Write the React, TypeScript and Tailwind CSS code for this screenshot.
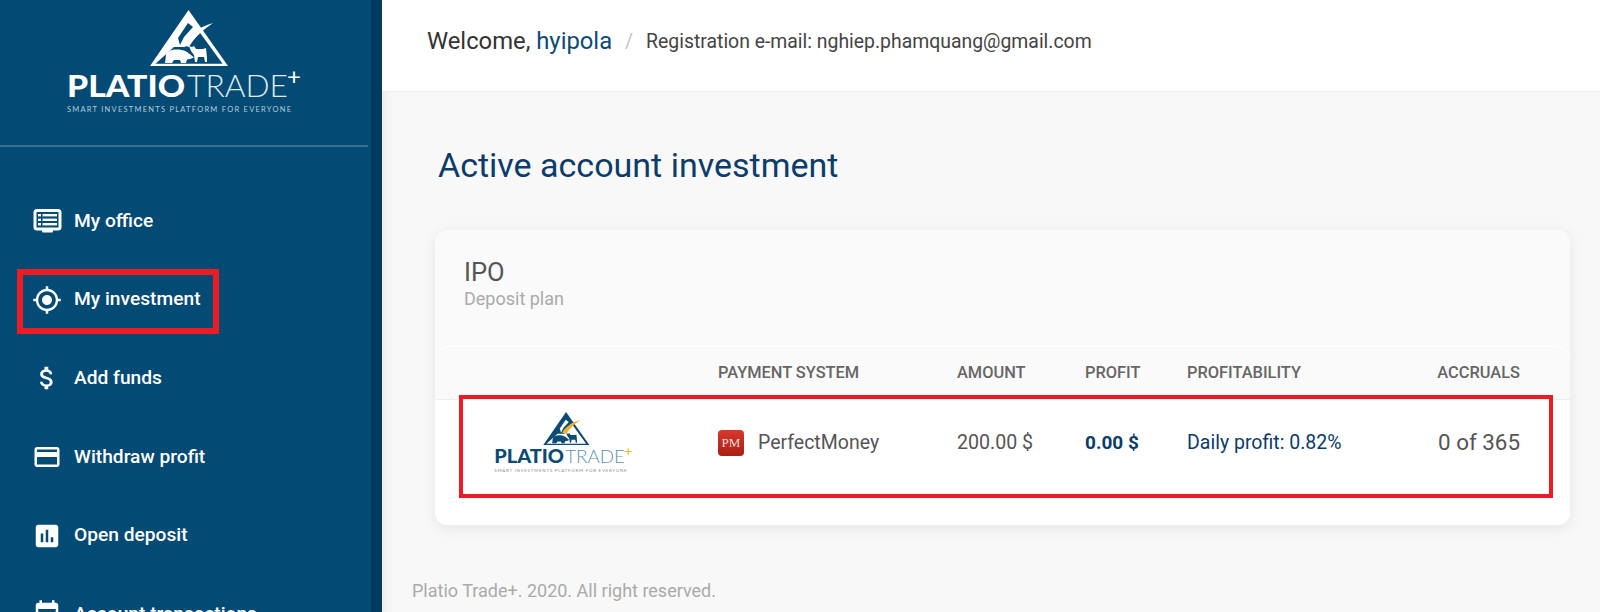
import { MdAssessment, MdAttachMoney, MdCreditCard, MdEvent, MdGpsFixed } from "react-icons/md"

function OfficeIcon() {
  return (
    <svg width="30" height="30" viewBox="0 0 30 30" fill="none">
      <rect x="3" y="4.5" width="25" height="18.5" rx="2" stroke="#fff" strokeWidth="3" />
      <rect x="10" y="24" width="11" height="2.6" rx="1" fill="#fff" />
      <rect x="6" y="8" width="3" height="2.4" fill="#fff" />
      <rect x="6" y="12.6" width="3" height="2.4" fill="#fff" />
      <rect x="6" y="17" width="3" height="2.4" fill="#fff" />
      <rect x="10.5" y="8" width="14.5" height="2.4" fill="#fff" />
      <rect x="10.5" y="12.6" width="14.5" height="2.4" fill="#fff" />
      <rect x="10.5" y="17" width="14.5" height="2.4" fill="#fff" />
    </svg>
  )
}

function Logo({ className, main, light, accent, tag, cut }: { className: string; main: string; light: string; accent: string; tag: string; cut: string }) {
  return (
    <svg className={className} viewBox="60 5 245 110">
      {/* mountain */}
      <path d="M188.5 10 L228 66 L150 66 Z" fill={main} />
      <path d="M155.5 63.7 L174 47 L185 47 L198 30 L222.5 63.7 Z" fill={cut} />
      <path d="M188 23 L193 27 L184 37 L180 45 L178 38 Z" fill={cut} />
      <path d="M182 45 C187 35 199 27 213 23 C205 29 196 35 189 47 Z" fill={accent} />
      {/* bear and bull */}
      <path d="M165 63 L166 55 C167 51 172 49.5 176 49.5 C180 49.5 184 50 187 52 L191 55 L194 57.5 L190 59 L187 59.5 L186 63 L181 63 L180 60 L174 60 L172 63 L168 63 Z" fill={main} />
      <path d="M189 46 L192 47 L194 46 L196 49 L203 49 L206 48 L207 58 L207 62 L205 62 L204 57 L198 57 L197 62 L195 62 L194 55 L191 51 Z" fill={main} />
      <text x="67" y="97" textLength="118" lengthAdjust="spacingAndGlyphs" fontFamily="Lato, sans-serif" fontWeight="900" fontSize="31" fill={main}>PLATIO</text>
      <text x="187" y="97" textLength="101" lengthAdjust="spacingAndGlyphs" fontFamily="Lato, sans-serif" fontWeight="300" fontSize="31" fill={light}>TRADE</text>
      <text x="287" y="85" fontFamily="Lato, sans-serif" fontWeight="400" fontSize="24" fill={accent}>+</text>
      <text x="67" y="112" textLength="224" fontFamily="Lato, sans-serif" fontWeight="400" fontSize="7.5" fill={tag}>SMART INVESTMENTS PLATFORM FOR EVERYONE</text>
    </svg>
  )
}

const navItems = [
  { label: "My office", icon: <OfficeIcon /> },
  { label: "My investment", icon: <MdGpsFixed size={30} />, marked: true },
  { label: "Add funds", icon: <MdAttachMoney size={30} /> },
  { label: "Withdraw profit", icon: <MdCreditCard size={30} /> },
  { label: "Open deposit", icon: <MdAssessment size={30} /> },
  { label: "Account transactions", icon: <MdEvent size={30} /> },
]

export default function App() {
  return (
    <div className="flex h-[612px] overflow-hidden bg-[#f8f8f8] font-['Roboto',sans-serif]">
      {/* Sidebar */}
      <aside className="w-[382px] shrink-0 bg-[#034a75] border-r-[11px] border-[#033b60] text-white">
        <div className="h-[147px] pt-[5px] border-b-2 border-[#3c6e90] mr-[3px]">
          <Logo className="w-[245px] h-[110px] ml-[60px]" main="#ffffff" light="#dfe8ee" accent="#ffffff" tag="#b5cad8" cut="#034a75" />
        </div>
        <nav className="pt-[35px]">
          {navItems.map((item) => (
            <div key={item.label} className="relative flex items-center h-[78.6px] pl-[32px] gap-[12px] text-[19.2px] font-medium">
              <span className="flex justify-center w-[30px]">{item.icon}</span>
              <span>{item.label}</span>
              {item.marked && (
                <div className="absolute left-[17px] top-[8px] w-[202px] h-[65px] border-[6px] border-[#ed1c24]" />
              )}
            </div>
          ))}
        </nav>
      </aside>

      {/* Main */}
      <main className="flex-1 min-w-0 shadow-[inset_12px_0_12px_-12px_rgba(0,0,0,0.1)]">
        <header className="flex items-center h-[92px] pl-[45px] pb-[7px] bg-white border-b border-[#eeeeee]">
          <span className="text-[23.8px] text-[#333333]">
            Welcome, <span className="text-[#0d4a75]">hyipola</span>
          </span>
          <span className="mx-[13px] text-[19.4px] text-[#c4c4c4]">/</span>
          <span className="text-[19.4px] text-[#444444]">Registration e-mail: nghiep.phamquang@gmail.com</span>
        </header>

        <div className="pl-[53px] pr-[30px]">
          <h1 className="mt-[52px] ml-[3px] text-[34px] leading-[42px] text-[#0b3c6b]">Active account investment</h1>

          {/* Card */}
          <section className="mt-[44px] h-[295px] rounded-[12px] bg-[#fafafa] shadow-[0_3px_14px_rgba(0,0,0,0.08)] overflow-hidden">
            <div className="h-[116px] pl-[29px] pt-[28px]">
              <div className="text-[25.5px] leading-[28px] text-[#555555]">IPO</div>
              <div className="text-[18px] leading-[26px] text-[#aaaaaa]">Deposit plan</div>
            </div>
            <div className="h-[179px] bg-white rounded-t-[14px] rounded-b-[12px]">
              <div className="grid grid-cols-[283px_239px_128px_102px_1fr] h-[54px] items-center pr-[50px] bg-[#fafafa] rounded-t-[14px] border-t border-white border-b-[#eeeeee] border-b text-[16.4px] font-medium text-[#666666]">
                <span />
                <span>PAYMENT SYSTEM</span>
                <span>AMOUNT</span>
                <span>PROFIT</span>
                <span className="flex justify-between">
                  <span>PROFITABILITY</span>
                  <span>ACCRUALS</span>
                </span>
              </div>
              <div className="relative grid grid-cols-[283px_239px_128px_102px_1fr] h-[86px] items-center pr-[50px]">
                <div className="pl-[55px] mb-[3px]">
                  <Logo className="w-[145px] h-[65px]" main="#0b4a74" light="#5b92b3" accent="#f0b323" tag="#8a8f94" cut="#ffffff" />
                </div>
                <div className="flex items-center gap-[14px] text-[19.5px] text-[#555555]">
                  <span className="flex items-center justify-center w-[26px] h-[26px] rounded-[4px] bg-gradient-to-b from-[#d8382c] to-[#a81f16] font-['Liberation_Serif',serif] text-[13px] text-[#f8dcd8]">PM</span>
                  PerfectMoney
                </div>
                <span className="text-[19.6px] text-[#555555]">200.00 $</span>
                <span className="text-[19px] font-bold text-[#0b3c6b]">0.00 $</span>
                <span className="flex items-center justify-between">
                  <span className="text-[19.5px] text-[#0b3c6b]">Daily profit: 0.82%</span>
                  <span className="text-[22.4px] text-[#555555]">0 of 365</span>
                </span>
                <div className="absolute left-[24px] top-[-5px] w-[1094px] h-[103px] border-[4px] border-[#ed1c24]" />
              </div>
            </div>
          </section>

          <footer className="mt-[55px] -ml-[23px] text-[18px] leading-[22px] text-[#aaaaaa]">Platio Trade+. 2020. All right reserved.</footer>
        </div>
      </main>
    </div>
  )
}
